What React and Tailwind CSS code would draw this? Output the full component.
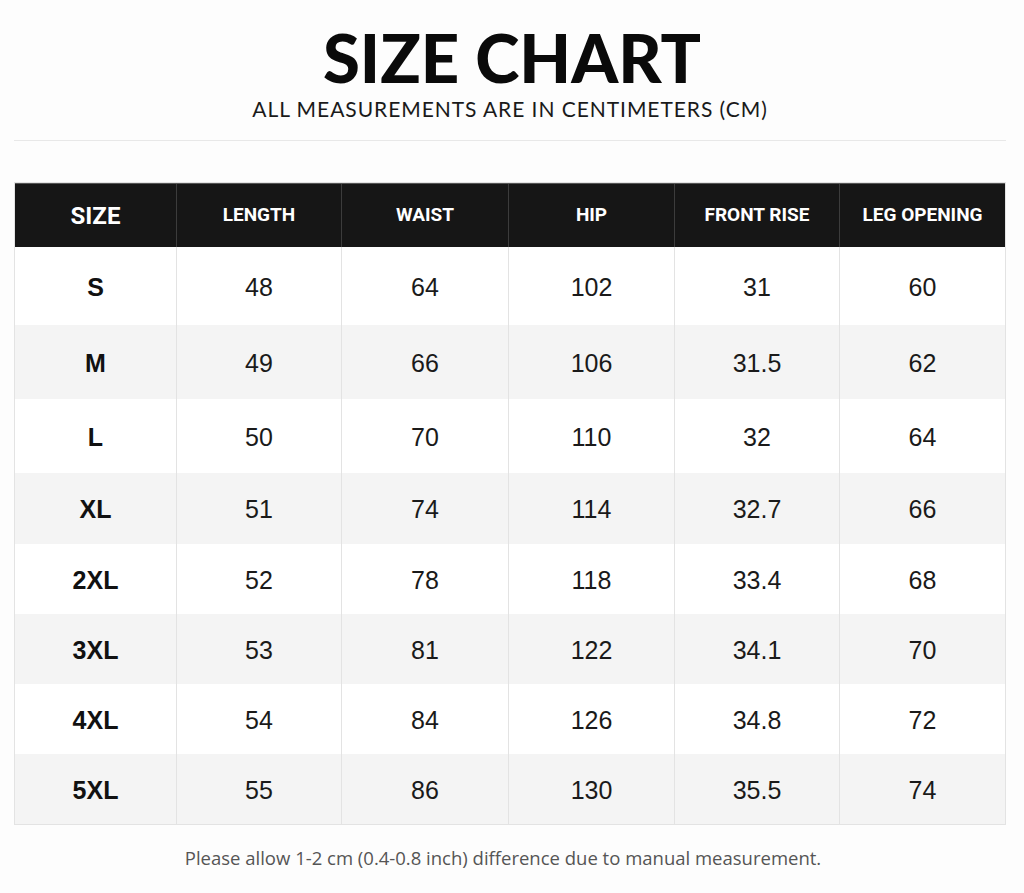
import React from 'react';

const headers = ['SIZE', 'LENGTH', 'WAIST', 'HIP', 'FRONT RISE', 'LEG OPENING'];

const rows = [
  { size: 'S', values: ['48', '64', '102', '31', '60'], h: 'h-[78px]' },
  { size: 'M', values: ['49', '66', '106', '31.5', '62'], h: 'h-[74px]' },
  { size: 'L', values: ['50', '70', '110', '32', '64'], h: 'h-[74px]' },
  { size: 'XL', values: ['51', '74', '114', '32.7', '66'], h: 'h-[71px]' },
  { size: '2XL', values: ['52', '78', '118', '33.4', '68'], h: 'h-[70px]' },
  { size: '3XL', values: ['53', '81', '122', '34.1', '70'], h: 'h-[70px]' },
  { size: '4XL', values: ['54', '84', '126', '34.8', '72'], h: 'h-[70px]' },
  { size: '5XL', values: ['55', '86', '130', '35.5', '74'], h: 'h-[70px]' },
];

const cols = 'grid grid-cols-[161px_165px_167px_166px_165px_166px]';

const App = () => {
  return (
    <div className="w-[1024px] h-[893px] bg-[#fdfdfd] pl-[14px] pr-[18px] flex flex-col items-center text-[#111]">
      {/* Title */}
      <h1 className="mt-[24px] ml-[4px] text-[67px] leading-none font-black font-['Lato',sans-serif] text-[#0a0a0a]">
        SIZE CHART
      </h1>
      <p className="mt-[7px] text-[21px] leading-none font-['Lato',sans-serif] tracking-[0.045em] text-[#1a1a1a]">
        ALL MEASUREMENTS ARE IN CENTIMETERS (CM)
      </p>
      <div className="mt-[21px] w-full h-px bg-[#e8e8e8]" />

      {/* Table */}
      <div className="mt-[41px] w-full border border-[#e3e3e3]">
        <div className={`${cols} h-[64px] bg-[#161616] border-t border-[#555]`}>
          {headers.map((h, i) => (
            <div
              key={h}
              className={`flex items-center justify-center text-white font-bold font-['Roboto',sans-serif] ${
                i === 0 ? 'text-[24px]' : 'text-[19px] border-l border-[#3c3c3c]'
              }`}
            >
              {h}
            </div>
          ))}
        </div>
        {rows.map((r, idx) => (
          <div key={r.size} className={`${cols} ${r.h} ${idx % 2 === 1 ? 'bg-[#f4f4f4]' : 'bg-white'}`}>
            <div className="flex items-center justify-center pt-[3px] text-[25px] font-bold font-['Liberation_Sans',sans-serif] text-[#111]">
              {r.size}
            </div>
            {r.values.map((v, i) => (
              <div
                key={i}
                className="flex items-center justify-center pt-[3px] border-l border-[#e3e3e3] text-[25px] font-['Liberation_Sans',sans-serif] text-[#1a1a1a]"
              >
                {v}
              </div>
            ))}
          </div>
        ))}
      </div>

      {/* Footer note */}
      <p className="mt-[24px] mr-[14px] text-[18.5px] leading-none font-['Open_Sans',sans-serif] text-[#555]">
        Please allow 1-2 cm (0.4-0.8 inch) difference due to manual measurement.
      </p>
    </div>
  );
};

export default App;
